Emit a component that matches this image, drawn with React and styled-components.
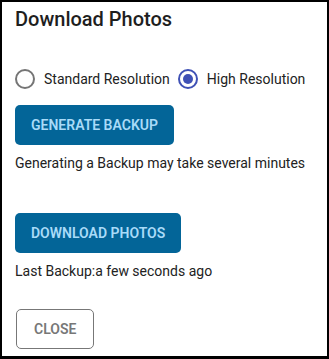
import styled, { createGlobalStyle } from 'styled-components'
import { useState } from 'react'

const GlobalStyle = createGlobalStyle`
  html, body {
    margin: 0;
    padding: 0;
    background: #fff;
  }
  * {
    box-sizing: border-box;
  }
`

const Dialog = styled.div`
  width: 329px;
  height: 359px;
  border: 2px solid #000;
  border-bottom-width: 3px;
  padding: 1px 13px 0;
  display: flex;
  flex-direction: column;
  font-family: Roboto, "Liberation Sans", sans-serif;
  color: #222;
  background: #fff;
`

const Title = styled.h2`
  margin: 0;
  font-size: 20px;
  font-weight: 500;
  line-height: 32px;
  color: #1e1e1e;
`

const RadioRow = styled.div`
  margin-top: 23px;
  height: 42px;
  display: flex;
  align-items: center;
  white-space: nowrap;
`

const RadioLabel = styled.label`
  display: flex;
  align-items: center;
  gap: 9px;
  margin-right: 8px;
  font-size: 14px;
  color: #222;
  cursor: pointer;
`

const RadioCircle = styled.span`
  flex: none;
  width: 20px;
  height: 20px;
  border-radius: 50%;
  border: 2px solid ${p => (p.checked ? '#3f51b5' : '#757575')};
  display: flex;
  align-items: center;
  justify-content: center;
  &::after {
    content: '';
    width: 10px;
    height: 10px;
    border-radius: 50%;
    background: #3f51b5;
    display: ${p => (p.checked ? 'block' : 'none')};
  }
`

const Button = styled.button`
  align-self: flex-start;
  height: 40px;
  padding: 0 ${p => (p.outlined ? 17 : 16)}px;
  border-radius: 5px;
  font-family: Roboto, "Liberation Sans", sans-serif;
  font-size: 14px;
  font-weight: 600;
  text-transform: uppercase;
  cursor: pointer;
  margin-top: ${p => p.top || 0}px;
  margin-left: ${p => (p.outlined ? 1 : 0)}px;
  background: ${p => (p.outlined ? '#fff' : '#036598')};
  color: ${p => (p.outlined ? '#777' : '#a9dbf8')};
  border: ${p => (p.outlined ? '1px solid #777' : 'none')};
`

const Note = styled.p`
  margin: ${p => p.top || 0}px 0 0;
  font-size: 14px;
  line-height: 20px;
  color: #222;
`

export default function App() {
  const [value, setValue] = useState('high')
  return (
    <>
      <GlobalStyle />
      <Dialog>
        <Title>Download Photos</Title>
        <RadioRow>
          <RadioLabel onClick={() => setValue('standard')}>
            <RadioCircle checked={value === 'standard'} />
            Standard Resolution
          </RadioLabel>
          <RadioLabel onClick={() => setValue('high')}>
            <RadioCircle checked={value === 'high'} />
            High Resolution
          </RadioLabel>
        </RadioRow>
        <Button top={5}>Generate Backup</Button>
        <Note top={8}>Generating a Backup may take several minutes</Note>
        <Button top={40}>Download Photos</Button>
        <Note top={8}>Last Backup:a few seconds ago</Note>
        <Button outlined top={28}>Close</Button>
      </Dialog>
    </>
  )
}
